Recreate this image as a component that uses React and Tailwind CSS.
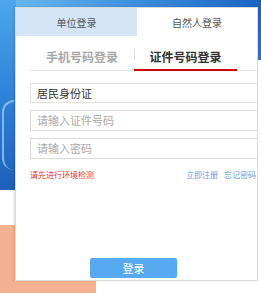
import React from 'react';

export default function App() {
  const font = { fontFamily: '"Noto Sans CJK SC", "Noto Sans", sans-serif' };

  return (
    <div className="relative w-[261px] h-[293px] overflow-hidden bg-white" style={font}>
      {/* background picture */}
      <div className="absolute left-0 top-0 w-[261px] h-[8px] bg-gradient-to-r from-[#6cbcf0] via-[#3d91de] to-[#1a63c2]" />
      <div className="absolute left-0 top-0 w-[16px] h-[190px] bg-gradient-to-b from-[#4fa6ea] via-[#2f82d8] to-[#1f5fb8]" />
      <div className="absolute left-[2px] top-[100px] w-[12px] h-[70px] rounded-l-full border-l-2 border-t-2 border-[#a9d3f5] opacity-70" />
      <div className="absolute right-0 top-0 w-[4px] h-[60px] bg-gradient-to-b from-[#1a5fbd] to-[#2a72cc]" />
      <div className="absolute left-0 top-[225px] w-[96px] h-[68px] bg-[#f4b192]" />

      {/* card */}
      <div className="relative ml-[15px] mt-[7px] w-[243px] h-[274px] bg-white border border-[#dcdcdc] shadow-[-1px_0_2px_rgba(0,0,0,0.15)] overflow-hidden flex flex-col">
        <div className="flex h-[28px] text-[10px] text-[#555]">
          <div className="w-[121px] bg-[#d5e5f7] flex items-center justify-center">单位登录</div>
          <div className="flex-1 flex items-center justify-center">自然人登录</div>
        </div>

        <div className="ml-[14px] mt-[14px] flex items-end border-b border-[#e6e6e6] h-[21px]">
          <div className="w-[104px] h-full flex items-start justify-center text-[12px] font-bold text-[#a8a8a8] leading-[14px]">手机号码登录</div>
          <div className="w-[103px] h-full relative flex items-start justify-center text-[12px] font-bold text-[#333] leading-[14px]">
            <span className="absolute left-0 top-[-2px] w-px h-[12px] bg-[#ddd]" />
            证件号码登录
            <span className="absolute left-0 bottom-[-1px] w-full h-[2px] bg-[#d20000]" />
          </div>
        </div>

        <div className="ml-[14px] mt-[12px] mr-[-4px] flex flex-col gap-[7px] text-[11px]">
          <div className="h-[20px] border border-[#e2e2e2] flex items-center pl-[6px] text-[#333]">居民身份证</div>
          <div className="h-[21px] border border-[#dadada] flex items-center pl-[6px] text-[#aaa]">请输入证件号码</div>
          <div className="h-[21px] border border-[#dadada] flex items-center pl-[6px] text-[#aaa]">请输入密码</div>
        </div>

        <div className="ml-[14px] mt-[11px] mr-[1px] flex items-center text-[8px] leading-[10px]">
          <span className="text-[#e8341f]">请先进行环境检测</span>
          <span className="ml-auto text-[#5b9de0]">立即注册</span>
          <span className="ml-[6px] text-[#5b9de0]">忘记密码</span>
        </div>

        <div className="flex-1" />
        <div className="mb-[2px] ml-[74px] w-[87px] h-[20px] rounded-[2px] bg-[#57aaf0] flex items-center justify-center text-[11px] text-white">登录</div>
      </div>
    </div>
  );
}
